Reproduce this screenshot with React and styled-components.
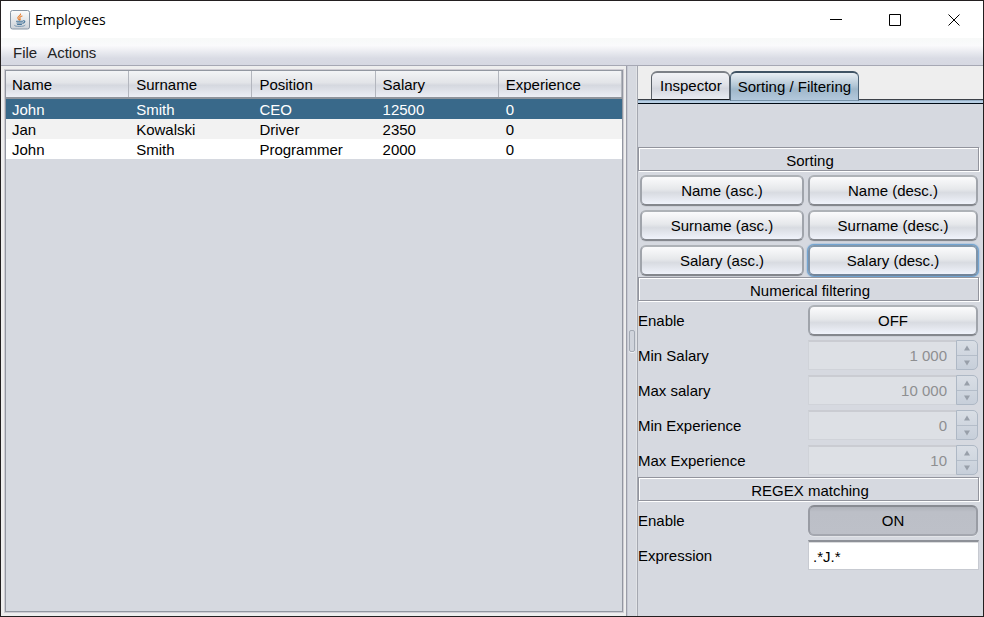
import React, { useState } from "react";
import styled, { createGlobalStyle, css } from "styled-components";

const GlobalStyle = createGlobalStyle`
  * { box-sizing: border-box; }
  body { margin: 0; background: #d6d9e0; }
  body, button, input, table {
    font-family: "Liberation Sans", Arial, sans-serif;
    font-size: 15px;
    line-height: 20px;
    color: #000;
  }
`;

const Window = styled.div`
  display: flex;
  flex-direction: column;
  min-height: 100vh;
  border: 1px solid #231f20;
  background: #eeeeee;
`;

const TitleBar = styled.header`
  display: flex;
  align-items: center;
  height: 37px;
  padding-left: 9px;
  gap: 5px;
  background: #fff;
`;

const Title = styled.h1`
  flex: 1;
  margin: 0;
  font: 400 14px/20px "Open Sans", "Noto Sans", sans-serif;
`;

const WindowControls = styled.div`
  display: flex;
`;

const WindowButton = styled.button`
  display: grid;
  place-items: center;
  width: 59px;
  height: 35px;
  padding: 0;
  border: 0;
  background: none;
`;

const MenuBar = styled.nav`
  display: flex;
  align-items: center;
  gap: 10px;
  height: 28px;
  padding: 2px 12px 0;
  border-bottom: 1px solid #a6a8b4;
  background: linear-gradient(#f7f9f8, #fafafc 28%, #d9dbe4 75%, #d6d8e2);
`;

const MenuButton = styled.button`
  padding: 0;
  border: 0;
  background: none;
  color: #232323;
`;

const SplitPane = styled.main`
  flex: 1;
  display: grid;
  grid-template-columns: minmax(0, 1fr) 12px 345px;
`;

const TablePane = styled.section`
  display: flex;
  padding: 4px 3px 4px 4px;
`;

const TableFrame = styled.div`
  flex: 1;
  border: 1px solid #9297a1;
  box-shadow: 0 0 0 1px #cfccd3;
  background: #d6d9e0;
`;

const Table = styled.table`
  width: 100%;
  table-layout: fixed;
  border-collapse: separate;
  border-spacing: 0;
`;

const HeadCell = styled.th`
  height: 28px;
  padding: 1px 0 0 7px;
  text-align: left;
  font-weight: 400;
  border-bottom: 2px solid #8f949c;
  background: linear-gradient(90deg, transparent calc(100% - 1px), #b3b6be 0),
    linear-gradient(#f3f4f6, #e2e4e8 45%, #d5d8df 55%, #eceef5);
  &:first-child { padding-left: 6px; }
`;

const Row = styled.tr`
  height: 20px;
  background: ${(p) => (p.$selected ? "#39698a" : p.$striped ? "#f2f2f2" : "#fff")};
  color: ${(p) => (p.$selected ? "#fff" : "#000")};
`;

const Cell = styled.td`
  height: 20px;
  padding: 1px 0 0 7px;
  line-height: 19px;
  &:first-child { padding-left: 6px; }
`;

const Divider = styled.div`
  display: flex;
  align-items: center;
  justify-content: center;
  border-left: 1px solid #9b9da8;
  border-right: 1px solid #a5a8b1;
  box-shadow: inset 1px 0 #c6c8d3, inset -1px 0 #e1e3e6;
  background: #d6d9e0;
`;

const Grip = styled.span`
  width: 6px;
  height: 22px;
  border: 1px solid #a3a9b3;
  border-radius: 2px;
  background: #d0d4dc;
  box-shadow: 0 1px #eef0f4;
`;

const SidePane = styled.aside`
  display: flex;
  flex-direction: column;
  background: #d6d9e0;
`;

const TabStrip = styled.div`
  display: flex;
  align-items: flex-end;
  height: 39px;
  padding: 0 0 4px 13px;
  background: linear-gradient(#eeeeee 33px, #3c4148 33px, #3c4148 34px, #7390a8 34px, #b8cfe5 35px, #b8d0e4 37px, #000a14 37px, #000a14 38px, #d6d9e0 38px);
`;

const Tab = styled.button`
  height: 30px;
  padding: 0 7px;
  border: 1px solid #596068;
  border-top-width: 2px;
  border-radius: 6px 6px 0 0;
  background: linear-gradient(#f2f3f6, #dfe1e7 45%, #d3d6de 60%, #e9ecf2);
  ${(p) =>
    p.$active
      ? css`
          border-color: #3f5364 #4e6478 #7994aa;
          background: linear-gradient(#e8eef3, #b5c8d7 45%, #9fb7ca 60%, #b3c8dc);
        `
      : css`
          height: 29px;
          margin-bottom: 1px;
          padding-left: 8px;
          border-bottom: 1px solid #17191d;
          border-top-color: #7d8187;
        `}
`;

const Form = styled.form`
  display: grid;
  grid-template-columns: 168px minmax(0, 1fr);
  grid-auto-rows: auto;
  padding: 42px 3px 0 0;
`;

const SectionTitle = styled.h2`
  grid-column: 1 / -1;
  height: 24px;
  margin: 0 1px 1px 0;
  padding: 2px 0 0 3px;
  border: 1px solid #92949d;
  box-shadow: inset 1px 1px #fff, 1px 1px #fff;
  font-size: 15px;
  font-weight: 400;
  line-height: 22px;
  text-align: center;
`;

const Field = styled.div`
  display: flex;
  align-items: flex-start;
  height: 35px;
  padding: ${(p) => (p.$flush ? "3px 1px 0 2px" : "3px 2px 0")};
`;

const Label = styled.label`
  display: flex;
  align-items: center;
  height: 35px;
  padding-top: 2px;
`;

const PushButton = styled.button`
  width: 100%;
  height: 31px;
  padding: 1px 0 0;
  border: 2px solid;
  border-color: #aeb2b7 #a0a4ab #84878d;
  border-radius: 6px;
  background: linear-gradient(#fbfbfc, #e6e8eb 45%, #d8dbe1 58%, #f0f3fb);
  outline: none;
  box-shadow: 0 1px #cbced5;
  ${(p) =>
    p.$focused &&
    css`
      border-color: #8398ab #7f93a8 #728499;
      box-shadow: 0 0 0 1px #73a4d1, 0 0 2px 1px #73a4d1;
    `}
  ${(p) =>
    p.$pressed &&
    css`
      border-color: #888b92 #999ca4 #a4a7af;
      background: linear-gradient(#afb2ba, #bcbfc7 5px, #bdc0c8);
      box-shadow: 0 1px #e3e5e9;
    `}
`;

const TextInput = styled.input`
  width: 100%;
  height: 30px;
  padding: 1px 4px 0;
  border: 1px solid #c7cad1;
  border-top: 2px solid #8d9097;
  background: #fff;
  box-shadow: inset 0 1px #dadbdd;
  outline: none;
`;

const Spinner = styled.div`
  display: flex;
  width: 100%;
  height: 30px;
`;

const SpinnerInput = styled.input`
  flex: 1;
  min-width: 0;
  padding: 1px 9px 0;
  border: 1px solid #d0d3d9;
  border-top: 2px solid #caccd2;
  border-right: 0;
  background: #dde0e5;
  color: #8e8f91;
  text-align: right;
`;

const Arrows = styled.div`
  display: grid;
  grid-template-rows: 1fr 1fr;
  width: 22px;
  border: 1px solid #aeb8c5;
  border-radius: 0 5px 5px 0;
  background: linear-gradient(#d9dee5, #c7cfda);
`;

const ArrowButton = styled.button`
  display: grid;
  place-items: center;
  padding: 0;
  border: 0;
  background: none;
  & + & { border-top: 1px solid #b4bdc9; }
`;

function JavaIcon() {
  return (
    <svg width="20" height="20" viewBox="0 0 20 20" aria-hidden="true">
      <defs>
        <linearGradient id="tile" x2="0" y2="1">
          <stop stopColor="#fcfcfc" />
          <stop offset="1" stopColor="#cdd2d8" />
        </linearGradient>
      </defs>
      <rect x=".5" y=".5" width="19" height="18.500" rx="2" fill="url(#tile)" stroke="#8795a4" />
      <g fill="none" strokeLinecap="round">
        <path d="M10.500 4C11.200 5.500 7.500 6.200 7.800 8c.2 1 1 1.300 1.300 1.800M12 6c-1.800.7-2.800 1.500-2 2.500.4.600.3 1-.2 1.500" stroke="#e88133" strokeWidth="1.200" />
        <path d="M6.500 11.200h6M7 13h5M7.500 14.500h4M13.300 10.800c2.300-.4 1.800 1.800-.3 2.300" stroke="#48779b" strokeWidth="1.100" />
        <path d="M4.500 15.300c-1 .9 4 1.300 7 1 2-.2 3-.5 3.500-1" stroke="#7896af" />
      </g>
    </svg>
  );
}

const windowGlyphs = {
  Minimize: "M0 5.500h12",
  Maximize: "M.5.5h11v11H.5z",
  Close: "M.5.5l11 11M11.500.5l-11 11",
};

const columns = ["Name", "Surname", "Position", "Salary", "Experience"];
const employees = [
  ["John", "Smith", "CEO", "12500", "0"],
  ["Jan", "Kowalski", "Driver", "2350", "0"],
  ["John", "Smith", "Programmer", "2000", "0"],
];
const sorts = ["Name (asc.)", "Name (desc.)", "Surname (asc.)", "Surname (desc.)", "Salary (asc.)", "Salary (desc.)"];
const limits = [
  ["Min Salary", "1 000"],
  ["Max salary", "10 000"],
  ["Min Experience", "0"],
  ["Max Experience", "10"],
];

function NumberSpinner({ id, value, name, disabled }) {
  return (
    <Spinner>
      <SpinnerInput id={id} defaultValue={value} disabled={disabled} />
      <Arrows>
        {["up", "down"].map((dir) => (
          <ArrowButton key={dir} type="button" disabled={disabled} aria-label={`${name} ${dir}`}>
            <svg width="6" height="6" viewBox="0 0 6 6">
              <path d={dir === "up" ? "M0 5.500L3 .5l3 5z" : "M0 .5h6l-3 5z"} fill="#989fa9" />
            </svg>
          </ArrowButton>
        ))}
      </Arrows>
    </Spinner>
  );
}

export default function App() {
  const [selected, setSelected] = useState(0);
  const [sort, setSort] = useState("Salary (desc.)");
  const [tab, setTab] = useState("Sorting / Filtering");
  const [numeric, setNumeric] = useState(false);
  const [regex, setRegex] = useState(true);

  return (
    <Window>
      <GlobalStyle />
      <TitleBar>
        <JavaIcon />
        <Title>Employees</Title>
        <WindowControls>
          {Object.entries(windowGlyphs).map(([name, d]) => (
            <WindowButton key={name} aria-label={name}>
              <svg width="12" height="12" viewBox="0 0 12 12">
                <path d={d} fill="none" stroke="#000" />
              </svg>
            </WindowButton>
          ))}
        </WindowControls>
      </TitleBar>
      <MenuBar>
        <MenuButton>File</MenuButton>
        <MenuButton>Actions</MenuButton>
      </MenuBar>
      <SplitPane>
        <TablePane>
          <TableFrame>
            <Table>
              <thead>
                <tr>
                  {columns.map((c) => (
                    <HeadCell key={c} scope="col">{c}</HeadCell>
                  ))}
                </tr>
              </thead>
              <tbody>
                {employees.map((row, i) => (
                  <Row key={i} $selected={i === selected} $striped={i % 2 === 1} onClick={() => setSelected(i)}>
                    {row.map((v, j) => (
                      <Cell key={j}>{v}</Cell>
                    ))}
                  </Row>
                ))}
              </tbody>
            </Table>
          </TableFrame>
        </TablePane>
        <Divider role="separator" aria-orientation="vertical">
          <Grip />
        </Divider>
        <SidePane>
          <TabStrip role="tablist">
            {["Inspector", "Sorting / Filtering"].map((t) => (
              <Tab key={t} role="tab" aria-selected={t === tab} $active={t === tab} onClick={() => setTab(t)}>
                {t}
              </Tab>
            ))}
          </TabStrip>
          <Form onSubmit={(e) => e.preventDefault()}>
            <SectionTitle>Sorting</SectionTitle>
            {sorts.map((s) => (
              <Field key={s}>
                <PushButton type="button" $focused={s === sort} onClick={() => setSort(s)}>{s}</PushButton>
              </Field>
            ))}
            <SectionTitle>Numerical filtering</SectionTitle>
            <Label htmlFor="numeric">Enable</Label>
            <Field>
              <PushButton id="numeric" type="button" aria-pressed={numeric} $pressed={numeric} onClick={() => setNumeric(!numeric)}>
                {numeric ? "ON" : "OFF"}
              </PushButton>
            </Field>
            {limits.map(([name, value], i) => (
              <React.Fragment key={name}>
                <Label htmlFor={`limit-${i}`}>{name}</Label>
                <Field>
                  <NumberSpinner id={`limit-${i}`} name={name} value={value} disabled={!numeric} />
                </Field>
              </React.Fragment>
            ))}
            <SectionTitle>REGEX matching</SectionTitle>
            <Label htmlFor="regex">Enable</Label>
            <Field>
              <PushButton id="regex" type="button" aria-pressed={regex} $pressed={regex} onClick={() => setRegex(!regex)}>
                {regex ? "ON" : "OFF"}
              </PushButton>
            </Field>
            <Label htmlFor="expression">Expression</Label>
            <Field $flush>
              <TextInput id="expression" defaultValue=".*J.*" disabled={!regex} />
            </Field>
          </Form>
        </SidePane>
      </SplitPane>
    </Window>
  );
}
